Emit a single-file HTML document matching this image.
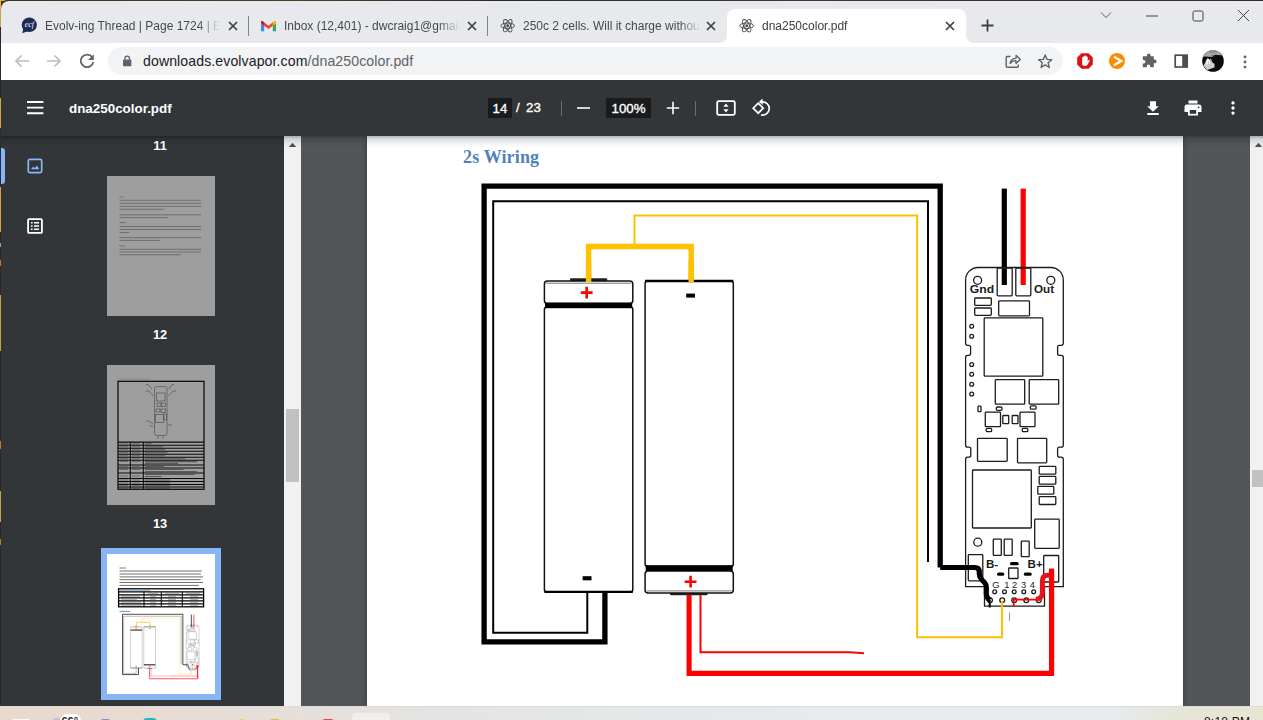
<!DOCTYPE html>
<html>
<head>
<meta charset="utf-8">
<title>dna250color.pdf</title>
<style>
*{box-sizing:border-box;margin:0;padding:0}
html,body{width:1263px;height:720px;overflow:hidden;background:#2b2a27;font-family:"Liberation Sans",sans-serif}
.abs{position:absolute}
#root{position:absolute;left:0;top:0;width:1263px;height:720px;overflow:hidden;background:#323639}
/* desktop edges */
#deskL{left:0;top:0;width:1px;height:720px;background:linear-gradient(180deg,#f0b020 0px,#f0b020 8px,#d2a43c 8px,#d2a43c 27px,#2a2723 27px,#2a2723 98px,#d9a62c 98px,#d9a62c 128px,#2e2b28 128px,#2e2b28 187px,#d6a534 187px,#d6a534 232px,#2c2926 232px,#2c2926 243px,#8a9ad0 243px,#8a9ad0 247px,#2c2926 247px,#2c2926 260px,#c8742c 260px,#c8742c 266px,#2c2926 266px,#2c2926 295px,#c9a040 295px,#c9a040 351px,#2c2926 351px,#2c2926 441px,#c07a30 441px,#c07a30 449px,#2c2926 449px,#2c2926 491px,#c8a050 491px,#c8a050 522px,#2c2926 522px,#2c2926 539px,#c07a30 539px,#c07a30 545px,#2c2926 545px,#2c2926 720px)}
#deskT{left:0;top:0;width:1263px;height:1px;background:linear-gradient(90deg,#f0b020 0,#f0b020 4px,#3a3424 6px,#4a4028 300px,#2a2a2a 500px,#3a3a38 800px,#2d2c2a 100%)}
/* tab strip */
#tabstrip{left:1px;top:1px;width:1262px;height:41.5px;background:#e7e9ed;border-top-left-radius:8px}
.tab{position:absolute;top:9px;height:33px;font-size:13.6px;color:#45494d;white-space:nowrap}
.tab .t{position:absolute;top:8px;left:43px;overflow:hidden}
.tab .x{position:absolute;top:6px;width:16px;height:16px}
.tabsep{position:absolute;top:16px;width:1px;height:20px;background:#808387}
#tabA{left:727px;top:9px;width:239px;height:34px;background:#fff;border-radius:8px 8px 0 0}
/* toolbar */
#toolbar{left:1px;top:42.5px;width:1262px;height:37.5px;background:#fff}
#omni{left:108px;top:46.800px;width:955px;height:28px;border-radius:14px;background:#f1f3f4}
#url{left:143px;top:53px;font-size:14.1px;line-height:17px;color:#5f6368;white-space:nowrap;letter-spacing:0.1px}
#url b{font-weight:normal;color:#202124}
/* pdf toolbar */
#pdfbar{left:1px;top:80px;width:1262px;height:56px;background:#323639;z-index:5}
#pdfbar .w{color:#fff}
/* sidebar */
#side{left:1px;top:136px;width:283px;height:570px;background:#323639}
#sideSB{left:284px;top:136px;width:17px;height:570px;background:#f1f1f1}
#main{left:301px;top:136px;width:949px;height:570px;background:#525659}
#mainSB{left:1250px;top:136px;width:13px;height:570px;background:#f1f1f1}
#page{left:367px;top:136px;width:816px;height:570px;background:#fff;box-shadow:0 0 5px rgba(0,0,0,.38)}
#topsh{left:1px;top:136px;width:1262px;height:12px;background:linear-gradient(rgba(0,0,0,.30) 0,rgba(0,0,0,.13) 3px,rgba(0,0,0,.05) 7px,rgba(0,0,0,0) 12px);z-index:4;pointer-events:none}
#taskbar{left:0;top:706px;width:1263px;height:14px;overflow:hidden;background:linear-gradient(90deg,#e9d9cd 0,#e7dcd4 15%,#e5e3e1 33%,#e5e7e8 48%,#e5ebef 65%,#e6ecee 88%,#e6e5d9 93%,#e8e5d3 100%);border-top:1px solid #d9dcdc;z-index:9}
.num{position:absolute;width:60px;text-align:center;color:#fff;font-size:12.8px;font-weight:bold;line-height:16px}
.ttxt{top:18px;height:17px;font-size:12px;line-height:16px;color:#45494d;white-space:nowrap;overflow:hidden;-webkit-mask-image:linear-gradient(90deg,#000 0,#000 calc(100% - 22px),transparent 100%)}
</style>
</head>
<body>
<div id="root">
<div id="tabstrip" class="abs"></div>
<div id="deskT" class="abs"></div>

<!-- TAB STRIP CONTENT -->
<div id="tabA" class="abs"></div>
<svg class="abs" style="left:719px;top:35px" width="8" height="8"><path d="M8 8H0A8 8 0 0 0 8 0Z" fill="#fff"/></svg>
<svg class="abs" style="left:966px;top:35px" width="8" height="8"><path d="M0 8H8A8 8 0 0 1 0 0Z" fill="#fff"/></svg>

<!-- tab1 favicon -->
<svg class="abs" style="left:20px;top:17px" width="18" height="18" viewBox="0 0 18 18">
<ellipse cx="9.3" cy="7.8" rx="7.6" ry="7.2" fill="#1d2a57"/><path d="M3.2 11.5L2.3 16.2L7.5 14.2Z" fill="#1d2a57"/>
<text x="9.3" y="10.3" font-family="Liberation Serif,serif" font-style="italic" font-size="8" fill="#fff" text-anchor="middle">ecf</text></svg>
<div class="abs ttxt" style="left:45px;width:175px">Evolv-ing Thread | Page 1724 | E-Cigarette Forum</div>
<svg class="abs xx" style="left:227px;top:20px" width="12" height="12"><path d="M2 2L10 10M10 2L2 10" stroke="#3c4043" stroke-width="1.7" fill="none"/></svg>
<div class="tabsep" style="left:248px"></div>

<!-- tab2 gmail -->
<svg class="abs" style="left:261px;top:21px" width="15" height="11" viewBox="0 0 15 11">
<path d="M0 1.2V10.2H3.2V4.6L0 1.2Z" fill="#4285f4"/><path d="M15 1.2V10.2H11.8V4.6L15 1.2Z" fill="#34a853"/>
<path d="M0 1.2C0 .2 1.3-.3 2.1.4L7.5 4.7L12.9.4C13.7-.3 15 .2 15 1.2V2.2L7.5 8.1L0 2.2Z" fill="#ea4335"/>
<path d="M0 1.2V2.2L3.2 4.7V1.3L2.1.4C1.3-.3 0 .2 0 1.2Z" fill="#c5221f"/><path d="M15 1.2V2.2L11.8 4.7V1.3L12.9.4C13.7-.3 15 .2 15 1.2Z" fill="#fbbc04"/></svg>
<div class="abs ttxt" style="left:284px;width:176px">Inbox (12,401) - dwcraig1@gmail.com</div>
<svg class="abs xx" style="left:466px;top:20px" width="12" height="12"><path d="M2 2L10 10M10 2L2 10" stroke="#3c4043" stroke-width="1.7" fill="none"/></svg>
<div class="tabsep" style="left:487px"></div>

<!-- tab3 atom -->
<svg class="abs" style="left:499.500px;top:18px" width="15.400" height="15.400" viewBox="0 0 17 17"><g fill="none" stroke="#4a4d50" stroke-width="1.1"><ellipse cx="8.5" cy="8.5" rx="7.6" ry="3"/><ellipse cx="8.5" cy="8.5" rx="7.6" ry="3" transform="rotate(60 8.5 8.5)"/><ellipse cx="8.5" cy="8.5" rx="7.6" ry="3" transform="rotate(120 8.5 8.5)"/></g><circle cx="8.5" cy="8.5" r="1.6" fill="#4a4d50"/></svg>
<div class="abs ttxt" style="left:523px;width:178px">250c 2 cells. Will it charge without balance</div>
<svg class="abs xx" style="left:705px;top:20px" width="12" height="12"><path d="M2 2L10 10M10 2L2 10" stroke="#3c4043" stroke-width="1.7" fill="none"/></svg>

<!-- tab4 active -->
<svg class="abs" style="left:738.500px;top:18px" width="15.400" height="15.400" viewBox="0 0 17 17"><g fill="none" stroke="#4a4d50" stroke-width="1.1"><ellipse cx="8.5" cy="8.5" rx="7.6" ry="3"/><ellipse cx="8.5" cy="8.5" rx="7.6" ry="3" transform="rotate(60 8.5 8.5)"/><ellipse cx="8.5" cy="8.5" rx="7.6" ry="3" transform="rotate(120 8.5 8.5)"/></g><circle cx="8.5" cy="8.5" r="1.6" fill="#4a4d50"/></svg>
<div class="abs ttxt" style="left:762px;width:180px;color:#3c4043">dna250color.pdf</div>
<svg class="abs xx" style="left:944px;top:20px" width="12" height="12"><path d="M2 2L10 10M10 2L2 10" stroke="#3c4043" stroke-width="1.7" fill="none"/></svg>
<!-- new tab plus -->
<svg class="abs" style="left:980px;top:18px" width="15" height="15"><path d="M7.5 1.5V13.5M1.5 7.5H13.5" stroke="#3c4043" stroke-width="1.8" fill="none"/></svg>
<!-- window controls -->
<svg class="abs" style="left:1099px;top:9.800px" width="14" height="10"><path d="M2 2.5L7 7.5L12 2.5" stroke="#5a5d61" stroke-width="1" fill="none"/></svg>
<svg class="abs" style="left:1146px;top:14.700px" width="12" height="2"><path d="M0 1H12" stroke="#444" stroke-width="1"/></svg>
<svg class="abs" style="left:1192px;top:9.500px" width="12" height="12"><rect x="1" y="1" width="10" height="10" rx="1.5" stroke="#444" stroke-width="1" fill="none"/></svg>
<svg class="abs" style="left:1237px;top:8.800px" width="13" height="13"><path d="M1 1L12 12M12 1L1 12" stroke="#444" stroke-width="1" fill="none"/></svg>
<div id="toolbar" class="abs"></div>
<div id="omni" class="abs"></div>

<!-- TOOLBAR CONTENT -->
<svg class="abs" style="left:13px;top:53px" width="18" height="16"><path d="M16 8H3M8.5 2.5L3 8L8.5 13.5" stroke="#bbbdc0" stroke-width="1.7" fill="none"/></svg>
<svg class="abs" style="left:45px;top:53px" width="18" height="16"><path d="M2 8H15M9.5 2.5L15 8L9.5 13.5" stroke="#bbbdc0" stroke-width="1.7" fill="none"/></svg>
<svg class="abs" style="left:78px;top:52px" width="18" height="18" viewBox="0 0 18 18"><path d="M14.2 5.2A6.3 6.3 0 1 0 15.3 9.8" stroke="#5f6368" stroke-width="1.8" fill="none"/><path d="M15.8 2.3V8H10.1Z" fill="#5f6368"/></svg>
<!-- lock -->
<svg class="abs" style="left:121.8px;top:54.6px" width="10.4" height="12.2" viewBox="0 0 12 14"><rect x="1.2" y="5.3" width="9.6" height="7.7" rx="1" fill="#5f6368"/><path d="M3.4 5.5V3.8A2.6 2.6 0 0 1 8.6 3.8V5.5" stroke="#5f6368" stroke-width="1.5" fill="none"/></svg>
<div id="url" class="abs"><b>downloads.evolvapor.com</b>/dna250color.pdf</div>
<!-- share -->
<svg class="abs" style="left:1004px;top:52px" width="18" height="18" viewBox="0 0 18 18"><path d="M6.5 4.5H3.2A1 1 0 0 0 2.2 5.5V14.3A1 1 0 0 0 3.2 15.3H13.3A1 1 0 0 0 14.3 14.3V12.5" stroke="#5f6368" stroke-width="1.4" fill="none"/><path d="M6 11.5C6.5 8 9 6.3 12 6.3V3.3L16.3 7.5L12 11.5V8.7C9.5 8.7 7.5 9.5 6 11.5Z" stroke="#5f6368" stroke-width="1.3" fill="none" stroke-linejoin="round"/></svg>
<!-- star -->
<svg class="abs" style="left:1036.900px;top:53px" width="16.400" height="16.400" viewBox="0 0 18 18"><path d="M9 2.2L11 7L16.2 7.4L12.2 10.8L13.5 15.9L9 13.1L4.5 15.9L5.8 10.8L1.8 7.4L7 7Z" stroke="#5f6368" stroke-width="1.55" fill="none" stroke-linejoin="round"/></svg>
<!-- ublock -->
<svg class="abs" style="left:1076px;top:52px" width="18" height="18" viewBox="0 0 18 18"><path d="M5.5 1.2H12.5L16.8 5.5V12.5L12.5 16.8H5.5L1.2 12.500V5.5Z" fill="#e01010"/><path d="M6.1 9.6V5.6Q6.1 4.9 6.8 4.9Q7.5 4.9 7.5 5.6V4.5Q7.5 3.8 8.2 3.8Q8.9 3.8 8.9 4.5V4.3Q8.9 3.6 9.6 3.6Q10.300 3.6 10.300 4.3V5Q10.300 4.400 11 4.400Q11.700 4.400 11.700 5.1V9.200L12.400 8.200Q13 7.5 13.600 8Q14 8.400 13.600 9L11.800 12.300Q10.900 14 9.200 14H8.600Q6.100 14 6.100 11.500Z" fill="#fff"/></svg>
<!-- orange play -->
<svg class="abs" style="left:1108px;top:52px" width="18" height="18" viewBox="0 0 18 18"><circle cx="9" cy="9" r="8" fill="#fb8c00"/><path d="M6 4.7L13.2 9L6 13.3" stroke="#fff" stroke-width="2.3" fill="none"/></svg>
<!-- puzzle -->
<svg class="abs" style="left:1140px;top:52px" width="18" height="18" viewBox="0 0 18 18"><path d="M7 3.2A1.8 1.8 0 0 1 10.6 3.2V4.2H13.8V7.6H14.8A1.8 1.8 0 0 1 14.8 11.2H13.8V15.2H10.2V14.2A1.7 1.7 0 0 0 6.8 14.2V15.2H2.8V11.4H3.8A1.7 1.7 0 0 0 3.8 8H2.8V4.2H7Z" fill="#5f6368"/></svg>
<!-- side panel -->
<svg class="abs" style="left:1172px;top:52px" width="18" height="18" viewBox="0 0 18 18"><rect x="3.2" y="3.2" width="12" height="11.800" stroke="#4a4d51" stroke-width="1.700" fill="none"/><rect x="10.200" y="3.2" width="5" height="11.800" fill="#4a4d51"/></svg>
<!-- avatar -->
<svg class="abs" style="left:1202px;top:50px" width="22" height="22" viewBox="0 0 22 22"><clipPath id="avc"><circle cx="11" cy="11" r="10.800"/></clipPath><g clip-path="url(#avc)"><rect width="22" height="22" fill="#0b0b0e"/><path d="M0 0H22V5.500L13 4.800L10.500 7L2 6.500L0 8Z" fill="#a3a8a8"/><path d="M7 1.500Q11 3 15 1.500" stroke="#7d8282" stroke-width="1" fill="none"/><path d="M1.500 15.500L4 11L5.500 8L7.500 10L9 8.500L10 12L12.500 14L12.500 17.500L5 20Z" fill="#c9ced2"/><path d="M4.500 10L6.300 8.500L7.800 10.300L8 14L5.500 14.500L4 13Z" fill="#f2f4f6"/><path d="M6 11.500L6.900 11.500L6.700 15L6.100 15Z" fill="#e0a8a8"/><rect x="3.700" y="10" width=".9" height=".9" fill="#c9a23a"/><rect x="8" y="10" width=".9" height=".9" fill="#c9a23a"/><path d="M9.500 6L11 4.800L11.500 7Z" fill="#4a3a40"/></g></svg>
<!-- menu -->
<svg class="abs" style="left:1242.300px;top:52.500px" width="6" height="18"><circle cx="3" cy="3.900" r="1.450" fill="#5f6368"/><circle cx="3" cy="9" r="1.450" fill="#5f6368"/><circle cx="3" cy="14.100" r="1.450" fill="#5f6368"/></svg>
<div id="pdfbar" class="abs"></div>

<!-- PDF BAR CONTENT -->
<div class="abs" style="z-index:6;left:0;top:0">
<svg class="abs" style="left:26.6px;top:101.4px" width="18" height="14"><path d="M0 1H16.4M0 6.6H16.4M0 12.2H16.4" stroke="#fff" stroke-width="1.9" fill="none"/></svg>
<div class="abs" style="left:69px;top:100.7px;font-size:13.4px;font-weight:bold;color:#fff;white-space:nowrap;line-height:16px">dna250color.pdf</div>
<div class="abs" style="left:488px;top:98px;width:24px;height:20px;background:#191b1c"></div>
<div class="abs" style="left:488px;top:100.800px;width:24px;text-align:center;font-size:13.3px;color:#fff;line-height:16px;-webkit-text-stroke:.35px #fff">14</div>
<div class="abs" style="left:516px;top:100.300px;font-size:13.3px;color:#fff;line-height:16px;white-space:nowrap;-webkit-text-stroke:.35px #fff">/&nbsp;&thinsp;23</div>
<div class="abs" style="left:561px;top:101px;width:1px;height:15px;background:#6b6e71"></div>
<svg class="abs" style="left:577px;top:107px" width="14" height="2"><path d="M0 1H13" stroke="#fff" stroke-width="1.600"/></svg>
<div class="abs" style="left:606px;top:98px;width:45px;height:20px;background:#191b1c"></div>
<div class="abs" style="left:606px;top:100.800px;width:45px;text-align:center;font-size:13.3px;color:#fff;line-height:16px;-webkit-text-stroke:.35px #fff">100%</div>
<svg class="abs" style="left:666px;top:101px" width="14" height="14"><path d="M7 .8V13.200M.8 7H13.200" stroke="#fff" stroke-width="1.600" fill="none"/></svg>
<div class="abs" style="left:695px;top:101px;width:1px;height:15px;background:#6b6e71"></div>
<!-- fit to page -->
<svg class="abs" style="left:716px;top:100px" width="20" height="16" viewBox="0 0 20 16"><rect x="1.2" y="1.2" width="17.6" height="13.6" rx="1.5" stroke="#fff" stroke-width="1.8" fill="none"/><path d="M10 3.600L12.600 6.800H7.400ZM10 12.400L12.600 9.200H7.400Z" fill="#fff"/></svg>
<!-- rotate -->
<svg class="abs" style="left:752px;top:98px" width="20" height="20" viewBox="0 0 20 20"><path d="M6.2 5.2L11.2 10.2L6.2 15.2L1.2 10.2Z" stroke="#fff" stroke-width="1.7" fill="none" stroke-linejoin="miter"/><path d="M10 3.8A6.7 6.7 0 1 1 9 17" stroke="#fff" stroke-width="1.7" fill="none"/><path d="M10.6 .6V7L7 3.8Z" fill="#fff"/></svg>
<!-- download -->
<svg class="abs" style="left:1145px;top:100px" width="16" height="16" viewBox="0 0 16 16"><path d="M5 1.200H11V6.200H13.800L8 11.800L2.200 6.200H5Z" fill="#fff"/><rect x="2.3" y="13" width="11.4" height="2" fill="#fff"/></svg>
<!-- print -->
<svg class="abs" style="left:1184px;top:100px" width="18" height="16" viewBox="0 0 18 16"><rect x="4.5" y=".5" width="9" height="3" fill="#fff"/><path d="M2.8 4.6H15.2A2.3 2.3 0 0 1 17.5 6.9V12H14V15.5H4V12H.5V6.9A2.3 2.3 0 0 1 2.8 4.6Z" fill="#fff"/><rect x="5.8" y="10" width="6.4" height="3.8" fill="#323639"/><circle cx="14.6" cy="7.3" r=".9" fill="#323639"/></svg>
<!-- more -->
<svg class="abs" style="left:1230px;top:100px" width="6" height="16"><circle cx="3" cy="2.900" r="1.650" fill="#fff"/><circle cx="3" cy="8" r="1.650" fill="#fff"/><circle cx="3" cy="13.100" r="1.650" fill="#fff"/></svg>
</div>
<div id="side" class="abs"></div>
<div id="sideSB" class="abs"></div>
<div id="main" class="abs"></div>
<div id="page" class="abs"></div>

<!-- MAIN PAGE CONTENT -->
<div class="abs" style="left:367px;top:136px;width:816px;height:570px;overflow:hidden">
<div class="abs" style="left:96px;top:9.8px;font-family:'Liberation Serif',serif;font-weight:bold;font-size:18px;letter-spacing:.15px;color:#4f81bd;line-height:22px;white-space:nowrap">2s Wiring</div>
<svg class="abs" style="left:-367px;top:-136px" width="1263" height="720" viewBox="0 0 1263 720">
<g id="DIAG">
<!-- outer thick black wire -->
<path d="M940.2 567.5V186.2H484.1V641.9H604.9V593" fill="none" stroke="#000" stroke-width="5.3" stroke-linejoin="miter"/>
<!-- inner thin black wire -->
<path d="M928 562V201.2H493.2V632.7H587.3V593" fill="none" stroke="#000" stroke-width="2"/>
<!-- thin yellow -->
<path d="M634.5 246V215.5H917.1V637.3H1002V601" fill="none" stroke="#ffc000" stroke-width="2"/>
<!-- thick yellow -->
<path d="M588.6 280V246.5H691.2V281.5" fill="none" stroke="#ffc000" stroke-width="5.4"/>
<!-- battery 1 -->
<rect x="570" y="278.3" width="37.3" height="3" rx="1.2" fill="#222"/>
<rect x="544.4" y="281" width="88.4" height="22.5" rx="3" fill="#fff" stroke="#111" stroke-width="1.5"/>
<path d="M546 283.2H631" stroke="#555" stroke-width=".8"/>
<rect x="544.4" y="307" width="88.4" height="285" rx="2.5" fill="#fff" stroke="#111" stroke-width="1.5"/>
<rect x="545" y="302.6" width="87.2" height="5.6" fill="#000"/>
<path d="M544.4 591.9H632.8" stroke="#000" stroke-width="2.4"/>
<path d="M580.8 292.6H592.6M586.7 286.7V298.5" stroke="#ff0000" stroke-width="2.6" fill="none"/>
<rect x="582.6" y="576.2" width="8.9" height="4.1" fill="#000"/>
<!-- battery 2 -->
<rect x="670" y="592.3" width="37.6" height="3" rx="1.2" fill="#222"/>
<rect x="645.1" y="571" width="88.2" height="22" rx="3" fill="#fff" stroke="#111" stroke-width="1.5"/>
<path d="M647 590.9H731.5" stroke="#555" stroke-width=".8"/>
<rect x="645.1" y="281" width="88.2" height="285.5" rx="2.5" fill="#fff" stroke="#111" stroke-width="1.5"/>
<rect x="645.7" y="565.2" width="87" height="5.8" fill="#000"/>
<path d="M645.1 281H733.3" stroke="#000" stroke-width="2.4"/>
<rect x="686.2" y="293.6" width="8.8" height="4" fill="#000"/>
<path d="M684.7 581.7H696.5M690.6 575.8V587.6" stroke="#ff0000" stroke-width="2.6" fill="none"/>
<!-- re-draw yellow ends over battery tops -->
<path d="M588.6 282V262M691.2 282V262" fill="none" stroke="#ffc000" stroke-width="5.4"/>
<!-- thin red -->
<path d="M700.5 595V652.2H850L864 653.2" fill="none" stroke="#ff0000" stroke-width="2"/>
<!-- thick red -->
<path d="M689.1 595V673.4H1051.5V568.7" fill="none" stroke="#ff0000" stroke-width="5.1"/>
<!-- output wires -->
<path d="M1004.3 188.6V285" stroke="#000" stroke-width="5.2"/>
<path d="M1023.2 188.6V285" stroke="#ff0000" stroke-width="5.2"/>
<!-- BOARD -->
<g fill="none" stroke="#1c1c1c" stroke-width="1.3">
<path d="M965.6 586.7V459.4Q965.6 457.2 967.6 457.2H969.0Q970.8 457.2 970.8 455.2V449.2Q970.8 447.2 969.0 447.2H967.6Q965.6 447.2 965.6 445.0V357.5Q965.6 355.3 967.6 355.3H968.8000000000001Q970.6 355.3 970.6 353.3V347.3Q970.6 345.3 968.8000000000001 345.3H967.6Q965.6 345.3 965.6 343.1V280A12.5 12.5 0 0 1 978.1 267.5H1050.8A12.5 12.5 0 0 1 1063.3 280V343.1Q1063.3 345.3 1061.3 345.3H1059.3999999999999Q1057.6 345.3 1057.6 347.3V353.3Q1057.6 355.3 1059.3999999999999 355.3H1061.3Q1063.3 355.3 1063.3 357.5V445.0Q1063.3 447.2 1061.3 447.2H1059.3999999999999Q1057.6 447.2 1057.6 449.2V455.2Q1057.6 457.2 1059.3999999999999 457.2H1061.3Q1063.3 457.2 1063.3 459.4V586.7H1044.5V606.2H984.5V586.7Z"/>
<rect x="997.2" y="268" width="15" height="27.8" rx="1"/>
<rect x="1015.8" y="268" width="15" height="27.8" rx="1"/>
<circle cx="977.6" cy="280.3" r="4"/>
<circle cx="1050.8" cy="280.3" r="4"/>
<rect x="974.7" y="298" width="16.6" height="7.3" rx=".8"/>
<rect x="974.7" y="308" width="16.6" height="7.4" rx=".8"/>
<rect x="998.7" y="300.8" width="30.8" height="15" rx=".8"/>
<rect x="984.2" y="317.9" width="58.6" height="58.3" rx=".8"/>
<circle cx="971.7" cy="326.3" r="1.9"/><circle cx="971.7" cy="336.3" r="1.9"/><circle cx="971.7" cy="364.5" r="1.9"/><circle cx="971.7" cy="374.3" r="1.9"/><circle cx="971.7" cy="384.3" r="1.9"/><circle cx="971.7" cy="394" r="1.9"/>
<rect x="995.3" y="379.7" width="29.4" height="24.5" rx=".8"/>
<rect x="1029.2" y="379.7" width="29.5" height="24.5" rx=".8"/>
<rect x="978" y="406.2" width="3" height="5.5" rx=".8"/>
<rect x="996.3" y="407" width="5.7" height="3.3" rx="1.2"/>
<rect x="1030.3" y="405.8" width="5.9" height="3.4" rx="1.2"/>
<rect x="985.3" y="412.2" width="15.2" height="14.5" rx=".8"/>
<rect x="1020" y="412.2" width="15" height="14.5" rx=".8"/>
<rect x="1002.8" y="415.5" width="5.9" height="8.2" rx=".6"/>
<rect x="1012.2" y="415.5" width="5.8" height="8.2" rx=".6"/>
<rect x="986.2" y="428.3" width="5.5" height="3.4" rx="1.2"/>
<rect x="1022.2" y="428.3" width="5.6" height="3.4" rx="1.2"/>
<rect x="977.5" y="438.3" width="29.7" height="23" rx=".8"/>
<rect x="1017.5" y="438.3" width="29.2" height="24.5" rx=".8"/>
<rect x="972.5" y="470" width="58.8" height="58" rx=".8"/>
<rect x="1039.2" y="466.3" width="16.6" height="7.9" rx=".8"/>
<rect x="1039.2" y="476.3" width="16.6" height="7.9" rx=".8"/>
<rect x="1037.8" y="486.3" width="16" height="7.9" rx=".8"/>
<rect x="1039.2" y="496.7" width="16.6" height="7.8" rx=".8"/>
<rect x="1034.7" y="519.2" width="24.5" height="29.1" rx=".8"/>
<circle cx="977.8" cy="542.2" r="4"/>
<rect x="993.3" y="539.2" width="8" height="16.1" rx=".6"/>
<rect x="1004.2" y="539.2" width="8" height="16.1" rx=".6"/>
<rect x="1021.3" y="541.2" width="7.9" height="15.5" rx=".6"/>
<rect x="968.3" y="554.7" width="14.5" height="26.1" rx=".8"/>
<rect x="1043.7" y="555.5" width="15" height="26.5" rx=".8"/>
<rect x="1008.7" y="568" width="9.3" height="10.5" rx=".6"/>
<circle cx="994.7" cy="591.7" r="1.9"/><circle cx="1004.5" cy="591.7" r="1.9"/><circle cx="1014.2" cy="591.7" r="1.9"/><circle cx="1023.8" cy="591.7" r="1.9"/><circle cx="1033.7" cy="591.7" r="1.9"/>
<circle cx="990" cy="600.3" r="2.4"/><circle cx="1002.2" cy="600.3" r="2.4"/><circle cx="1014.2" cy="600.3" r="2.4"/><circle cx="1026.3" cy="600.3" r="2.4"/><circle cx="1038.7" cy="600.3" r="2.4"/>
</g>
<rect x="1010" y="562" width="8.7" height="3.3" rx="1.6" fill="#000"/>
<rect x="997" y="572.5" width="7.3" height="3.3" rx="1.6" fill="#000"/>
<rect x="1023.8" y="572.5" width="7.9" height="3.3" rx="1.6" fill="#000"/>
<g font-family="Liberation Sans,sans-serif" fill="#1a1a1a">
<text x="969.8" y="293.4" font-size="11.3" font-weight="bold" textLength="24.3" lengthAdjust="spacingAndGlyphs">Gnd</text>
<text x="1034" y="293.4" font-size="11.3" font-weight="bold" textLength="20" lengthAdjust="spacingAndGlyphs">Out</text>
<text x="986" y="568" font-size="11.6" font-weight="bold">B-</text>
<text x="1027.6" y="568" font-size="11.6" font-weight="bold">B+</text>
<text x="992.2" y="587.5" font-size="9.4">G</text>
<text x="1004.2" y="587.5" font-size="9.4">1</text>
<text x="1012" y="587.5" font-size="9.4">2</text>
<text x="1021" y="587.5" font-size="9.4">3</text>
<text x="1029.7" y="587.5" font-size="9.4">4</text>
</g>
<!-- thick black to B- then to G hole -->
<path d="M940.2 567.5H975Q979 567.5 979.3 571.5V574Q979.5 577.5 982 580L984.5 582.5Q986.3 584.3 986.3 587.5V594Q986.3 597.5 989.7 600.2" fill="none" stroke="#000" stroke-width="5.2" stroke-linejoin="round"/>
<path d="M989.7 600V607.5" stroke="#000" stroke-width="2"/>
<!-- yellow end on hole -->
<path d="M1002 637.3V601" stroke="#ffc000" stroke-width="2"/>
<!-- red thin from hole 2 to 4 -->
<path d="M1013.7 606V599.6H1038" fill="none" stroke="#ff0000" stroke-width="1.9"/>
<path d="M1036 599.3Q1042.2 598.5 1042.4 593V581Q1042.4 575.3 1047.5 575.3H1051" fill="none" stroke="#e8141c" stroke-width="5" stroke-linecap="butt"/>
<path d="M1051.6 673.4V568.7" stroke="#ff0000" stroke-width="5.1"/>
<path d="M1009.5 612.5V620.8" stroke="#777" stroke-width=".8"/>
</g>

</svg>
</div>
<div id="mainSB" class="abs"></div>

<!-- SIDEBAR CONTENT -->
<div class="abs" style="left:1px;top:148px;width:4px;height:36px;background:#8ab4f8;border-radius:0 3px 3px 0"></div>
<svg class="abs" style="left:26px;top:157px" width="18" height="18" viewBox="0 0 18 18"><rect x="2.3" y="2.3" width="13.4" height="13.4" rx="1.6" stroke="#8ab4f8" stroke-width="1.7" fill="none"/><path d="M5 12.3L7.2 9.4L8.8 11.3L10.9 8.6L13.3 12.3Z" fill="#8ab4f8"/></svg>
<svg class="abs" style="left:26px;top:217px" width="18" height="18" viewBox="0 0 18 18"><rect x="2.1" y="2.1" width="13.8" height="13.8" rx="1" stroke="#fff" stroke-width="1.8" fill="none"/><path d="M5 5.8H6.6M5 9H6.6M5 12.2H6.6M8 5.8H13M8 9H13M8 12.2H13" stroke="#fff" stroke-width="1.5" fill="none"/></svg>
<div class="num" style="left:130px;top:138px">11</div>
<div class="num" style="left:130px;top:327px">12</div>
<div class="num" style="left:130px;top:516px">13</div>
<svg class="abs" style="left:0;top:136px" width="284" height="570" viewBox="0 136 284 570">
<!-- thumb 12 -->
<rect x="107" y="176" width="108" height="140" fill="#9e9e9e"/>
<path d="M119 197H124" stroke="#4a6a90" stroke-width="1" opacity=".7"/><path d="M119.5 200.3H201.0M119.5 203.3H201.0M119.5 206.3H201.0M119.5 209.3H164.3" stroke="#333" stroke-width="0.8" opacity="0.55" fill="none"/><path d="M119.5 214.8H201.0M119.5 217.6H168.4" stroke="#333" stroke-width="0.8" opacity="0.55" fill="none"/><path d="M119.5 222.6H126.0" stroke="#333" stroke-width="0.8" opacity="0.55" fill="none"/><path d="M119.5 226.5H201.0M119.5 229.5H201.0M119.5 232.5H129.3" stroke="#333" stroke-width="0.8" opacity="0.55" fill="none"/><path d="M119.5 237.6H201.0M119.5 240.4H160.2" stroke="#333" stroke-width="0.8" opacity="0.55" fill="none"/><path d="M119 246H125" stroke="#4a6a90" stroke-width="1" opacity=".7"/><path d="M119.5 249.3H201.0M119.5 252H201.0M119.5 254.8H180.6" stroke="#333" stroke-width="0.8" opacity="0.55" fill="none"/>
<!-- thumb 13 -->
<rect x="107" y="365" width="108" height="140" fill="#9e9e9e"/>
<path d="M119 379H150" stroke="#4a6a90" stroke-width=".8" opacity=".45"/>
<rect x="118" y="381.3" width="86" height="108" fill="none" stroke="#0a0a0a" stroke-width="1.25"/>
<path d="M118 442.2H204" stroke="#0a0a0a" stroke-width="1.2"/>
<g stroke="#333" stroke-width=".6" fill="none" opacity=".8">
<rect x="154.5" y="386.5" width="12.5" height="49" rx="2"/>
<rect x="156.5" y="393" width="8.5" height="8"/><rect x="157" y="403" width="4" height="3.5"/><rect x="161.5" y="403" width="4" height="3.5"/>
<rect x="156" y="409" width="4" height="3"/><rect x="161" y="409" width="4.5" height="3.5"/>
<rect x="155.5" y="414.5" width="8" height="8"/><rect x="164" y="414" width="2.5" height="6"/>
<path d="M152 389L148 384.5H146M169 389L172 384.5H174M153 396L149 391H146M168.5 396L173 391H176M153 424L149 421H146M153 427L149 425M168 425L172 425M158 436V439M163 436V439"/>
</g>
<path d="M118 445.2H204M118 448.2H204M118 451.2H204M118 454.2H204M118 457.2H204M118 460.2H204M118 465H204M118 468H204M118 473H204M118 478.5H204M118 481.5H204M118 484.5H204M118 487H204M130.3 442.2V489.3M143.3 442.2V489.3" stroke="#0a0a0a" stroke-width="1.05" fill="none"/><path d="M145 443.8H151.8M145 446.7H163.0M145 449.7H165.2M145 452.7H167.5M145 455.7H165.2M145 458.7H185.5" stroke="#222" stroke-width="1.1" opacity="0.55" fill="none"/><path d="M145 461.6H197.2M145 463.4H178.0M145 466.5H164.2M145 469.5H183.5M145 471.5H197.2M145 474.5H194.5M145 476.5H161.5" stroke="#222" stroke-width="1.1" opacity="0.55" fill="none"/><path d="M145 480H170.0M145 483H170.0M145 485.8H170.0M145 488.3H170.0" stroke="#222" stroke-width="1.1" opacity="0.55" fill="none"/><path d="M119.5 443.8H128.0M119.5 446.7H128.0M119.5 449.7H128.0M119.5 452.7H128.0M119.5 455.7H128.0M119.5 458.7H128.0M119.5 461.6H128.0M119.5 466.5H128.0M119.5 469.5H128.0M119.5 476H128.0M119.5 480H128.0M119.5 483H128.0M119.5 485.8H128.0M119.5 488.3H128.0" stroke="#222" stroke-width="1.0" opacity="0.4" fill="none"/><path d="M132 443.8H140.0M132 446.7H140.0M132 449.7H140.0M132 452.7H140.0M132 455.7H140.0M132 458.7H140.0M132 461.6H140.0M132 466.5H140.0M132 469.5H140.0M132 476H140.0M132 480H140.0M132 483H140.0M132 485.8H140.0M132 488.3H140.0" stroke="#222" stroke-width="1.0" opacity="0.4" fill="none"/>
<!-- thumb 14 selected -->
<rect x="101" y="548" width="120" height="152" fill="#8ab4f8"/>
<rect x="107" y="554" width="108" height="140" fill="#fff"/>
<path d="M119.5 568H126" stroke="#4f81bd" stroke-width="1.1" opacity=".85"/>
<path d="M119.5 571H201.7M119.5 574H200.9M119.5 576.9H203.0M119.5 579.7H200.5M119.5 582.5H203.0M119.5 585.4H198.8" stroke="#222" stroke-width="0.9" opacity="0.72" fill="none"/><rect x="118.6" y="588.8" width="85" height="18" fill="#fff" stroke="#000" stroke-width="1.3"/>
<path d="M118.6 591.8H203.6M118.6 594.8H203.6M118.6 597.8H203.6M118.6 600.8H203.6M118.6 603.8H203.6" stroke="#000" stroke-width="1.2"/>
<path d="M144 591.8V606.8M161.3 591.8V606.8M182.3 591.8V606.8" stroke="#000" stroke-width="1"/>
<path d="M120 590.3H150" stroke="#4f81bd" stroke-width=".8" opacity=".8"/>
<path d="M148 593.3H158M165 593.3H179M186 593.3H200M121 596.3H140M150 596.3H156M168 596.3H176M190 596.3H198M121 599.3H137M150 599.3H156M168 599.3H176M190 599.3H198M121 602.3H141M150 602.3H156M168 602.3H176M190 602.3H198M121 605.3H142M150 605.3H156M168 605.3H176M190 605.3H198" stroke="#333" stroke-width=".7" opacity=".6"/>
<path d="M119.5 611.4H130" stroke="#4f81bd" stroke-width="1" opacity=".85"/>
<g transform="translate(58.428 589.642) scale(0.13235)"><g>

<path d="M940.2 567.5V186.2H484.1V641.9H604.9V593" fill="none" stroke="#000" stroke-width="5.3" stroke-linejoin="miter"/>

<path d="M928 562V201.2H493.2V632.7H587.3V593" fill="none" stroke="#000" stroke-width="2"/>

<path d="M634.5 246V215.5H917.1V637.3H1002V601" fill="none" stroke="#ffc000" stroke-width="2"/>

<path d="M588.6 280V246.5H691.2V281.5" fill="none" stroke="#ffc000" stroke-width="5.4"/>

<rect x="570" y="278.3" width="37.3" height="3" rx="1.2" fill="#222"/>
<rect x="544.4" y="281" width="88.4" height="22.5" rx="3" fill="#fff" stroke="#111" stroke-width="1.5"/>
<path d="M546 283.2H631" stroke="#555" stroke-width=".8"/>
<rect x="544.4" y="307" width="88.4" height="285" rx="2.5" fill="#fff" stroke="#111" stroke-width="1.5"/>
<rect x="545" y="302.6" width="87.2" height="5.6" fill="#000"/>
<path d="M544.4 591.9H632.8" stroke="#000" stroke-width="2.4"/>
<path d="M580.8 292.6H592.6M586.7 286.7V298.5" stroke="#ff0000" stroke-width="2.6" fill="none"/>
<rect x="582.6" y="576.2" width="8.9" height="4.1" fill="#000"/>

<rect x="670" y="592.3" width="37.6" height="3" rx="1.2" fill="#222"/>
<rect x="645.1" y="571" width="88.2" height="22" rx="3" fill="#fff" stroke="#111" stroke-width="1.5"/>
<path d="M647 590.9H731.5" stroke="#555" stroke-width=".8"/>
<rect x="645.1" y="281" width="88.2" height="285.5" rx="2.5" fill="#fff" stroke="#111" stroke-width="1.5"/>
<rect x="645.7" y="565.2" width="87" height="5.8" fill="#000"/>
<path d="M645.1 281H733.3" stroke="#000" stroke-width="2.4"/>
<rect x="686.2" y="293.6" width="8.8" height="4" fill="#000"/>
<path d="M684.7 581.7H696.5M690.6 575.8V587.6" stroke="#ff0000" stroke-width="2.6" fill="none"/>

<path d="M588.6 282V262M691.2 282V262" fill="none" stroke="#ffc000" stroke-width="5.4"/>

<path d="M700.5 595V652.2H850L864 653.2" fill="none" stroke="#ff0000" stroke-width="2"/>

<path d="M689.1 595V673.4H1051.5V568.7" fill="none" stroke="#ff0000" stroke-width="5.1"/>

<path d="M1004.3 188.6V285" stroke="#000" stroke-width="5.2"/>
<path d="M1023.2 188.6V285" stroke="#ff0000" stroke-width="5.2"/>

<g fill="none" stroke="#1c1c1c" stroke-width="1.3">
<path d="M965.6 586.7V459.4Q965.6 457.2 967.6 457.2H969.0Q970.8 457.2 970.8 455.2V449.2Q970.8 447.2 969.0 447.2H967.6Q965.6 447.2 965.6 445.0V357.5Q965.6 355.3 967.6 355.3H968.8000000000001Q970.6 355.3 970.6 353.3V347.3Q970.6 345.3 968.8000000000001 345.3H967.6Q965.6 345.3 965.6 343.1V280A12.5 12.5 0 0 1 978.1 267.5H1050.8A12.5 12.5 0 0 1 1063.3 280V343.1Q1063.3 345.3 1061.3 345.3H1059.3999999999999Q1057.6 345.3 1057.6 347.3V353.3Q1057.6 355.3 1059.3999999999999 355.3H1061.3Q1063.3 355.3 1063.3 357.5V445.0Q1063.3 447.2 1061.3 447.2H1059.3999999999999Q1057.6 447.2 1057.6 449.2V455.2Q1057.6 457.2 1059.3999999999999 457.2H1061.3Q1063.3 457.2 1063.3 459.4V586.7H1044.5V606.2H984.5V586.7Z"/>
<rect x="997.2" y="268" width="15" height="27.8" rx="1"/>
<rect x="1015.8" y="268" width="15" height="27.8" rx="1"/>
<circle cx="977.6" cy="280.3" r="4"/>
<circle cx="1050.8" cy="280.3" r="4"/>
<rect x="974.7" y="298" width="16.6" height="7.3" rx=".8"/>
<rect x="974.7" y="308" width="16.6" height="7.4" rx=".8"/>
<rect x="998.7" y="300.8" width="30.8" height="15" rx=".8"/>
<rect x="984.2" y="317.9" width="58.6" height="58.3" rx=".8"/>
<circle cx="971.7" cy="326.3" r="1.9"/><circle cx="971.7" cy="336.3" r="1.9"/><circle cx="971.7" cy="364.5" r="1.9"/><circle cx="971.7" cy="374.3" r="1.9"/><circle cx="971.7" cy="384.3" r="1.9"/><circle cx="971.7" cy="394" r="1.9"/>
<rect x="995.3" y="379.7" width="29.4" height="24.5" rx=".8"/>
<rect x="1029.2" y="379.7" width="29.5" height="24.5" rx=".8"/>
<rect x="978" y="406.2" width="3" height="5.5" rx=".8"/>
<rect x="996.3" y="407" width="5.7" height="3.3" rx="1.2"/>
<rect x="1030.3" y="405.8" width="5.9" height="3.4" rx="1.2"/>
<rect x="985.3" y="412.2" width="15.2" height="14.5" rx=".8"/>
<rect x="1020" y="412.2" width="15" height="14.5" rx=".8"/>
<rect x="1002.8" y="415.5" width="5.9" height="8.2" rx=".6"/>
<rect x="1012.2" y="415.5" width="5.8" height="8.2" rx=".6"/>
<rect x="986.2" y="428.3" width="5.5" height="3.4" rx="1.2"/>
<rect x="1022.2" y="428.3" width="5.6" height="3.4" rx="1.2"/>
<rect x="977.5" y="438.3" width="29.7" height="23" rx=".8"/>
<rect x="1017.5" y="438.3" width="29.2" height="24.5" rx=".8"/>
<rect x="972.5" y="470" width="58.8" height="58" rx=".8"/>
<rect x="1039.2" y="466.3" width="16.6" height="7.9" rx=".8"/>
<rect x="1039.2" y="476.3" width="16.6" height="7.9" rx=".8"/>
<rect x="1037.8" y="486.3" width="16" height="7.9" rx=".8"/>
<rect x="1039.2" y="496.7" width="16.6" height="7.8" rx=".8"/>
<rect x="1034.7" y="519.2" width="24.5" height="29.1" rx=".8"/>
<circle cx="977.8" cy="542.2" r="4"/>
<rect x="993.3" y="539.2" width="8" height="16.1" rx=".6"/>
<rect x="1004.2" y="539.2" width="8" height="16.1" rx=".6"/>
<rect x="1021.3" y="541.2" width="7.9" height="15.5" rx=".6"/>
<rect x="968.3" y="554.7" width="14.5" height="26.1" rx=".8"/>
<rect x="1043.7" y="555.5" width="15" height="26.5" rx=".8"/>
<rect x="1008.7" y="568" width="9.3" height="10.5" rx=".6"/>
<circle cx="994.7" cy="591.7" r="1.9"/><circle cx="1004.5" cy="591.7" r="1.9"/><circle cx="1014.2" cy="591.7" r="1.9"/><circle cx="1023.8" cy="591.7" r="1.9"/><circle cx="1033.7" cy="591.7" r="1.9"/>
<circle cx="990" cy="600.3" r="2.4"/><circle cx="1002.2" cy="600.3" r="2.4"/><circle cx="1014.2" cy="600.3" r="2.4"/><circle cx="1026.3" cy="600.3" r="2.4"/><circle cx="1038.7" cy="600.3" r="2.4"/>
</g>
<rect x="1010" y="562" width="8.7" height="3.3" rx="1.6" fill="#000"/>
<rect x="997" y="572.5" width="7.3" height="3.3" rx="1.6" fill="#000"/>
<rect x="1023.8" y="572.5" width="7.9" height="3.3" rx="1.6" fill="#000"/>


<path d="M940.2 567.5H975Q979 567.5 979.3 571.5V574Q979.5 577.5 982 580L984.5 582.5Q986.3 584.3 986.3 587.5V594Q986.3 597.5 989.7 600.2" fill="none" stroke="#000" stroke-width="5.2" stroke-linejoin="round"/>
<path d="M989.7 600V607.5" stroke="#000" stroke-width="2"/>

<path d="M1002 637.3V601" stroke="#ffc000" stroke-width="2"/>

<path d="M1013.7 606V599.6H1038" fill="none" stroke="#ff0000" stroke-width="1.9"/>
<path d="M1036 599.3Q1042.2 598.5 1042.4 593V581Q1042.4 575.3 1047.5 575.3H1051" fill="none" stroke="#e8141c" stroke-width="5" stroke-linecap="butt"/>
<path d="M1051.6 673.4V568.7" stroke="#ff0000" stroke-width="5.1"/>
<path d="M1009.5 612.5V620.8" stroke="#777" stroke-width=".8"/>
</g>
</g>
<path d="M172 676H198.500" stroke="#ff0000" stroke-width=".35"/>
</svg>
<!-- scrollbar thumbs & arrows -->
<div class="abs" style="left:286px;top:409px;width:13px;height:73px;background:#c1c1c1"></div>
<svg class="abs" style="left:288px;top:142px" width="9" height="6"><path d="M4.5 .8L8.2 5H.8Z" fill="#505050"/></svg>
<div class="abs" style="left:1252px;top:470px;width:13px;height:17px;background:#c1c1c1"></div>
<svg class="abs" style="left:1254px;top:142px" width="9" height="6"><path d="M4.5 .8L8.2 5H.8Z" fill="#505050"/></svg>
<div id="topsh" class="abs"></div>
<div id="taskbar" class="abs">
<div class="abs" style="left:352px;top:6px;width:38px;height:10px;background:rgba(255,255,255,.45);border-radius:4px 4px 0 0"></div>
<div class="abs" style="left:60px;top:7px;width:21px;height:14px;background:#fff;border-radius:7px;overflow:hidden"><div style="position:absolute;left:1.500px;top:1.500px;font-size:11px;font-weight:bold;color:#222;line-height:11px;white-space:nowrap">66&#176;</div></div>
<div class="abs" style="left:12px;top:12px;width:18px;height:4px;background:#fdfdfd;border-radius:2px 2px 0 0"></div>
<div class="abs" style="left:53px;top:11px;width:7px;height:4px;background:#b7c6e6;border-radius:3px 0 0 0"></div>
<div class="abs" style="left:101px;top:12px;width:9px;height:3px;background:#8f86d8;border-radius:2px 2px 0 0"></div>
<div class="abs" style="left:143px;top:11px;width:14px;height:4px;background:#22b8c8;border-radius:7px 7px 0 0"></div>
<div class="abs" style="left:239px;top:12px;width:4px;height:3px;background:#f2d43a"></div>
<div class="abs" style="left:271px;top:12px;width:8px;height:3px;background:#e8b83a"></div>
<div class="abs" style="left:322px;top:12px;width:12px;height:3px;background:#e0463c;border-radius:6px 6px 0 0"></div>
<div class="abs" style="left:1204px;top:8.300px;font-size:12px;color:#111;line-height:14px;white-space:nowrap;letter-spacing:.2px">8:18 PM</div>
</div>
<div id="deskL" class="abs"></div>
</div>
</body>
</html>
